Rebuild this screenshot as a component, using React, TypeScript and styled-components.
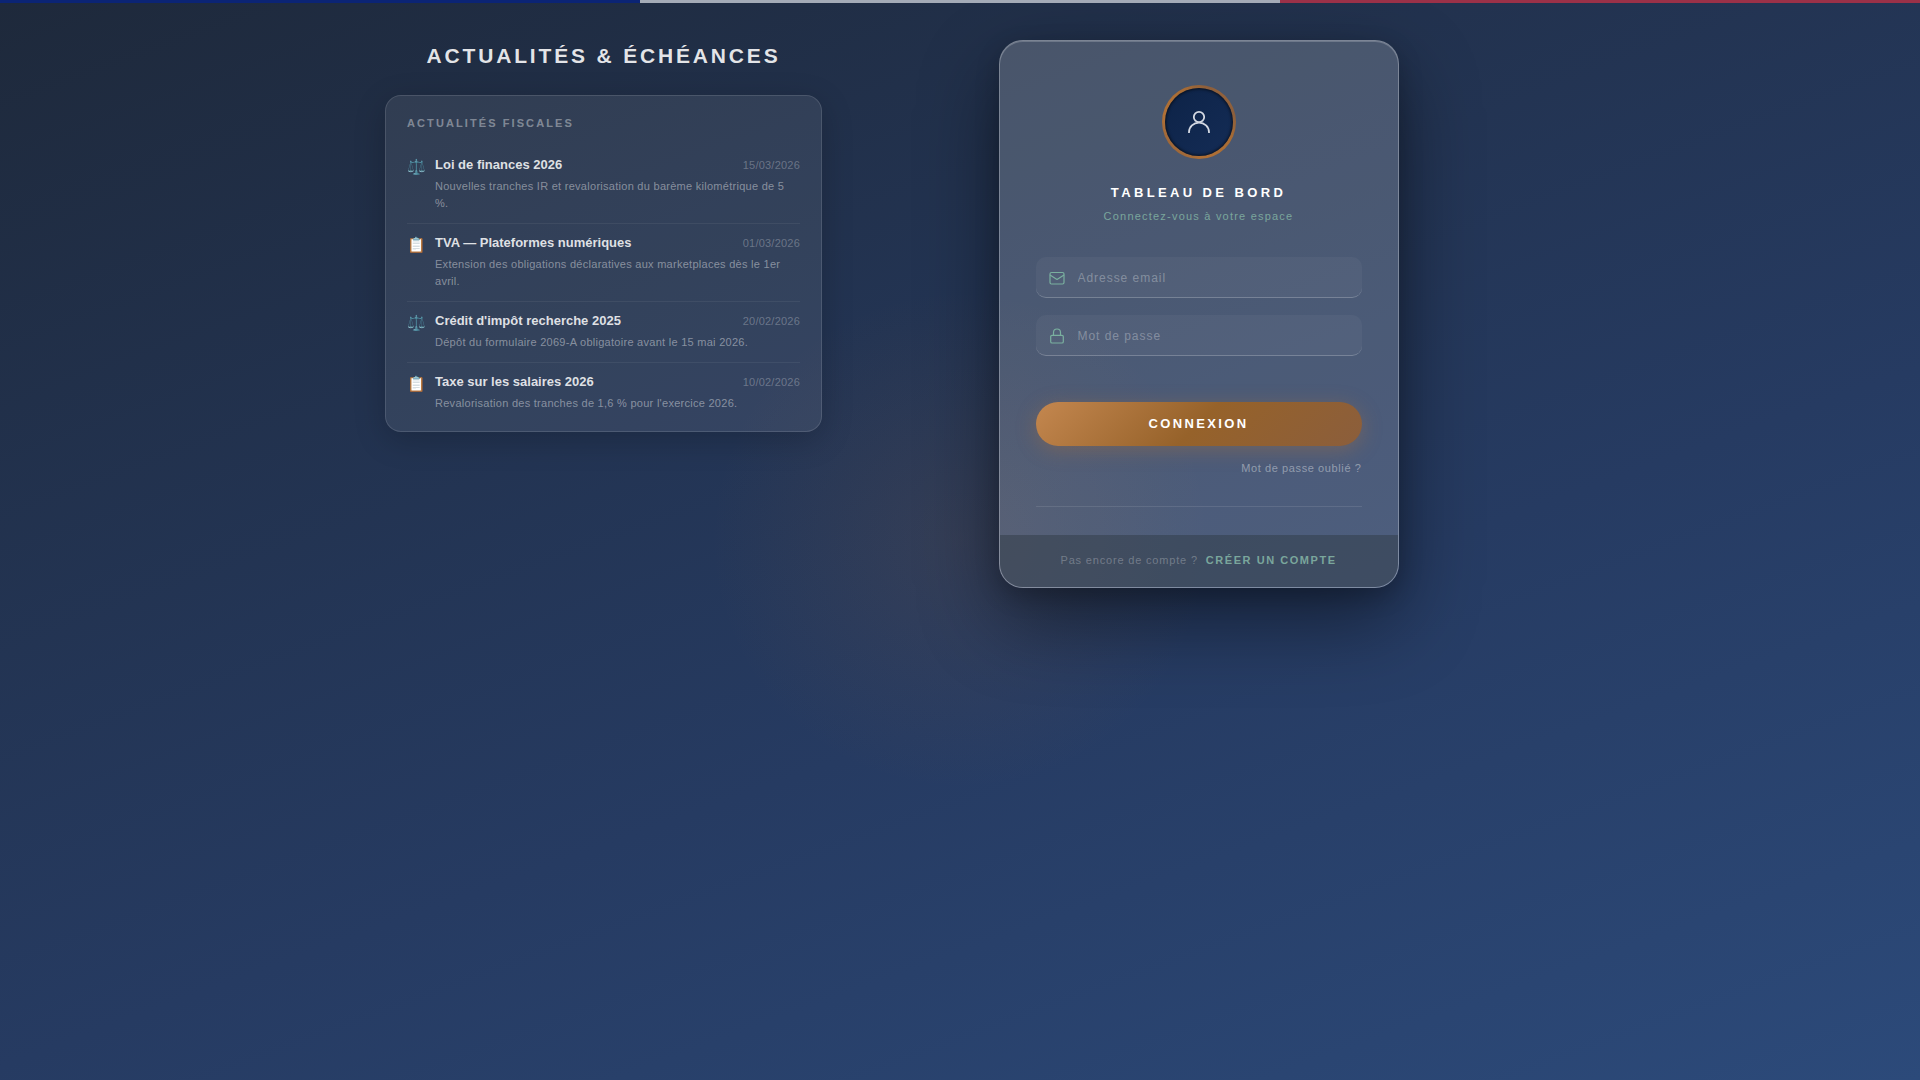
import React from 'react';
import styled, { createGlobalStyle } from 'styled-components';

const GlobalStyle = createGlobalStyle`
  *, *::before, *::after { box-sizing: border-box; }
  body {
    margin: 0;
    font-family: "Liberation Sans", Arial, sans-serif;
    color: #fff;
    background: #1e293b;
  }
  h1, h2, h3, p, ul { margin: 0; padding: 0; }
`;

const Page = styled.div`
  position: relative;
  min-height: 100vh;
  padding: 40px 24px;
  overflow: hidden;
  isolation: isolate;
  background: linear-gradient(160deg, #1e293b 0%, #263b62 60%, #2c4a7a 100%);
`;

const Glow = styled.div`
  position: absolute;
  inset: 0;
  z-index: -1;
  background: radial-gradient(circle at center, rgba(184, 115, 51, 0.11) 0, rgba(184, 115, 51, 0) 250px);
`;

const Flag = styled.div`
  position: absolute;
  inset: 0 0 auto;
  height: 3px;
  background: linear-gradient(to right, #0b2475 33.33%, #a4abb7 33.33% 66.66%, #9b3148 66.66%);
`;

const Columns = styled.main`
  display: grid;
  grid-template-columns: 437px 1fr;
  align-items: start;
  gap: 40px;
  max-width: 1150px;
  margin: 0 auto;
  @media (max-width: 960px) { grid-template-columns: 1fr; }
`;

const Heading = styled.h1`
  margin-bottom: 26px;
  padding-top: 2px;
  font-size: 21px;
  line-height: 27px;
  letter-spacing: 0.135em;
  text-align: center;
  text-transform: uppercase;
  color: rgba(255, 255, 255, 0.88);
`;

const NewsCard = styled.section`
  padding: 21px 21px 19px;
  border: 1px solid rgba(255, 255, 255, 0.12);
  border-radius: 16px;
  background: rgba(255, 255, 255, 0.08);
  box-shadow: 0 8px 32px rgba(0, 0, 0, 0.2);
`;

const CardTitle = styled.h2`
  margin-bottom: 16px;
  font-size: 11px;
  line-height: 13px;
  letter-spacing: 0.19em;
  text-transform: uppercase;
  color: rgba(255, 255, 255, 0.4);
`;

const NewsList = styled.ul`
  list-style: none;
`;

const NewsItem = styled.li`
  display: flex;
  gap: 10px;
  padding: 11px 0;
  border-bottom: 1px solid rgba(255, 255, 255, 0.06);
  &:last-child { padding-bottom: 0; border-bottom: 0; }
`;

const NewsIcon = styled.span`
  flex: none;
  width: 18px;
  padding-top: 2px;
  font-size: 15px;
  line-height: 16px;
`;

const NewsBody = styled.div`
  flex: 1;
`;

const NewsHead = styled.div`
  display: flex;
  align-items: baseline;
  justify-content: space-between;
  height: 15px;
  margin-bottom: 6px;
  line-height: 15px;
`;

const NewsTitle = styled.h3`
  font-size: 13px;
  line-height: 15px;
  color: rgba(255, 255, 255, 0.85);
`;

const NewsDate = styled.time`
  font-size: 11px;
  letter-spacing: 0.02em;
  color: rgba(255, 255, 255, 0.28);
`;

const NewsText = styled.p`
  font-size: 11px;
  line-height: 17px;
  letter-spacing: 0.025em;
  color: rgba(255, 255, 255, 0.42);
`;

const LoginCard = styled.section`
  width: 100%;
  max-width: 400px;
  justify-self: center;
  overflow: hidden;
  border: 1px solid rgba(255, 255, 255, 0.28);
  border-radius: 24px;
  background: rgba(255, 255, 255, 0.18);
  box-shadow: 0 32px 80px rgba(0, 0, 0, 0.45), 0 8px 24px rgba(0, 0, 0, 0.2),
    inset 0 1px 0 rgba(255, 255, 255, 0.2);
`;

const LoginBody = styled.div`
  display: flex;
  flex-direction: column;
  padding: 44px 36px 28px;
`;

const Avatar = styled.div`
  display: grid;
  place-items: center;
  align-self: center;
  width: 74px;
  height: 74px;
  border: 3px solid transparent;
  border-radius: 50%;
  background:
    linear-gradient(135deg, #0d2347, #142c56) padding-box,
    linear-gradient(45deg, #8b5e3c, #b07036 30%, #a86c34 60%, #8b5e3c 80%, #b07036) border-box;
  box-shadow: inset 0 0 3px 1px rgba(0, 0, 0, 0.6);
`;

const LoginTitle = styled.h2`
  margin-top: 26px;
  font-size: 13px;
  line-height: 16px;
  letter-spacing: 0.26em;
  text-align: center;
  text-transform: uppercase;
`;

const LoginHint = styled.p`
  margin: 9px 0 34px;
  font-size: 11px;
  line-height: 13px;
  letter-spacing: 0.11em;
  text-align: center;
  color: #7aa69c;
`;

const Form = styled.form`
  display: flex;
  flex-direction: column;
`;

const Field = styled.label`
  display: flex;
  align-items: center;
  gap: 13px;
  height: 41px;
  margin-bottom: 17px;
  padding: 1px 13px 0;
  border-bottom: 1px solid rgba(255, 255, 255, 0.22);
  border-radius: 10px;
  background: rgba(255, 255, 255, 0.04);
  color: #7ab09f;
  svg { flex: none; }
`;

const Input = styled.input`
  flex: 1;
  min-width: 0;
  padding: 0;
  border: 0;
  outline: 0;
  background: none;
  font: 12px "Liberation Sans", Arial, sans-serif;
  letter-spacing: 0.08em;
  color: #fff;
  &::placeholder { color: rgba(255, 255, 255, 0.3); opacity: 1; }
`;

const Submit = styled.button`
  height: 44px;
  margin-top: 29px;
  padding-bottom: 2px;
  border: 0;
  border-radius: 22px;
  background: linear-gradient(135deg, #c4874f 0%, #96622a 50%, #8b5e3c 100%);
  box-shadow: 0 4px 20px rgba(184, 115, 51, 0.35);
  font: bold 13px "Liberation Sans", Arial, sans-serif;
  letter-spacing: 0.18em;
  text-transform: uppercase;
  color: #fff;
  cursor: pointer;
`;

const Forgot = styled.a`
  align-self: flex-end;
  margin-top: 16px;
  font-size: 11px;
  line-height: 13px;
  letter-spacing: 0.055em;
  text-decoration: none;
  color: rgba(255, 255, 255, 0.4);
`;

const Divider = styled.hr`
  width: 100%;
  height: 1px;
  margin: 31px 0 0;
  border: 0;
  background: rgba(255, 255, 255, 0.1);
`;

const LoginFooter = styled.footer`
  display: flex;
  justify-content: center;
  gap: 8px;
  padding: 19px 36px 20px;
  background: rgba(45, 55, 65, 0.45);
  font-size: 11px;
  line-height: 13px;
  letter-spacing: 0.075em;
  color: rgba(255, 255, 255, 0.27);
`;

const SignUp = styled.a`
  font-weight: bold;
  letter-spacing: 0.14em;
  text-transform: uppercase;
  text-decoration: none;
  color: #7aa69c;
`;

const news = [
  { icon: '⚖️', title: 'Loi de finances 2026', date: '15/03/2026', text: 'Nouvelles tranches IR et revalorisation du barème kilométrique de 5 %.' },
  { icon: '📋', title: 'TVA — Plateformes numériques', date: '01/03/2026', text: 'Extension des obligations déclaratives aux marketplaces dès le 1er avril.' },
  { icon: '⚖️', title: "Crédit d'impôt recherche 2025", date: '20/02/2026', text: 'Dépôt du formulaire 2069-A obligatoire avant le 15 mai 2026.' },
  { icon: '📋', title: 'Taxe sur les salaires 2026', date: '10/02/2026', text: "Revalorisation des tranches de 1,6 % pour l'exercice 2026." },
];

const UserIcon = () => (
  <svg width="28" height="28" viewBox="0 0 28 28" fill="none" stroke="#d3d8e2" strokeWidth="1.8" aria-hidden="true">
    <circle cx="14" cy="9" r="5.200" />
    <path d="M4 25v-.800a10 9.600 0 0 1 20 0V25" />
  </svg>
);

const MailIcon = () => (
  <svg width="16" height="16" viewBox="0 0 16 16" fill="none" stroke="currentColor" strokeWidth="1.2" strokeLinejoin="round" aria-hidden="true">
    <rect x="1" y="2.500" width="14" height="11.500" rx="1.500" />
    <path d="M1 5l7 4.500L15 5" />
  </svg>
);

const LockIcon = () => (
  <svg width="16" height="16" viewBox="0 0 16 16" fill="none" stroke="currentColor" strokeWidth="1.2" aria-hidden="true">
    <rect x="1.700" y="7.300" width="12.600" height="7.700" rx="1.300" />
    <path d="M4.500 7.300V4.500a3.500 3.500 0 0 1 7 0v2.800" />
  </svg>
);

export default function App() {
  return (
    <Page>
      <GlobalStyle />
      <Glow />
      <Flag />
      <Columns>
        <div>
          <Heading>Actualités &amp; Échéances</Heading>
          <NewsCard>
            <CardTitle>Actualités fiscales</CardTitle>
            <NewsList>
              {news.map((item) => (
                <NewsItem key={item.title}>
                  <NewsIcon>{item.icon}</NewsIcon>
                  <NewsBody>
                    <NewsHead>
                      <NewsTitle>{item.title}</NewsTitle>
                      <NewsDate>{item.date}</NewsDate>
                    </NewsHead>
                    <NewsText>{item.text}</NewsText>
                  </NewsBody>
                </NewsItem>
              ))}
            </NewsList>
          </NewsCard>
        </div>
        <LoginCard>
          <LoginBody>
            <Avatar><UserIcon /></Avatar>
            <LoginTitle>Tableau de bord</LoginTitle>
            <LoginHint>Connectez-vous à votre espace</LoginHint>
            <Form onSubmit={(event) => event.preventDefault()}>
              <Field>
                <MailIcon />
                <Input type="email" placeholder="Adresse email" aria-label="Adresse email" />
              </Field>
              <Field>
                <LockIcon />
                <Input type="password" placeholder="Mot de passe" aria-label="Mot de passe" />
              </Field>
              <Submit type="submit">Connexion</Submit>
              <Forgot href="#reset">Mot de passe oublié ?</Forgot>
            </Form>
            <Divider />
          </LoginBody>
          <LoginFooter>
            <span>Pas encore de compte ?</span>
            <SignUp href="#signup">Créer un compte</SignUp>
          </LoginFooter>
        </LoginCard>
      </Columns>
    </Page>
  );
}
